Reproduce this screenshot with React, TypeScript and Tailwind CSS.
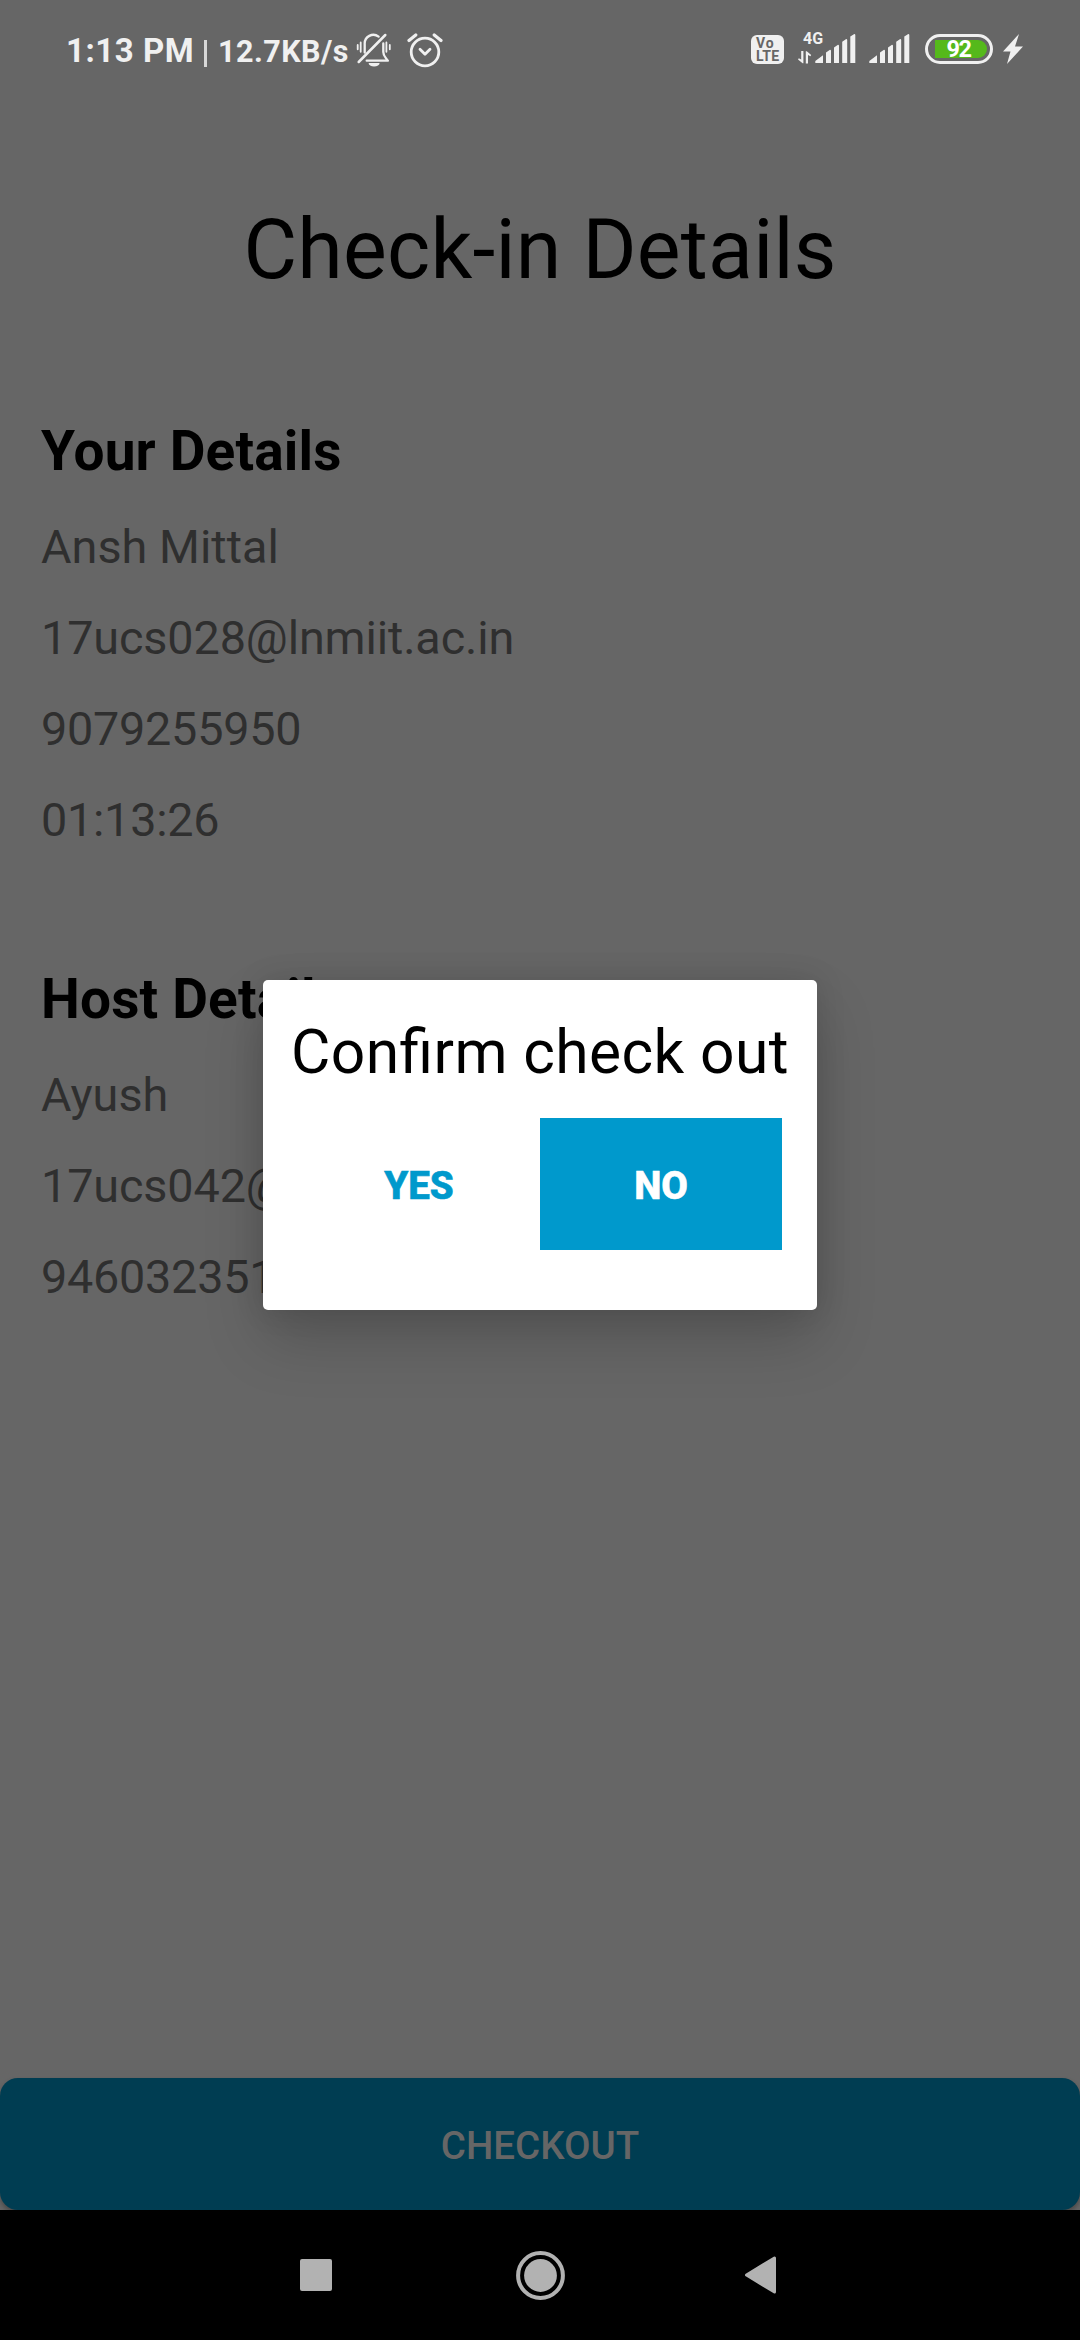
function SilentBell() {
  return (
    <svg className="h-9 w-[36px]" viewBox="0 0 36 36" fill="none" stroke="#f0f0f0" strokeWidth="2.3" strokeLinecap="round" strokeLinejoin="round">
      <path d="M8.7 20.5V12A8.7 8.7 0 0 1 22.6 4.6M27.3 11.5V20c0 4 2 5 4.5 8.7H10.7" />
      <path d="M2.7 30 29.3 3" strokeWidth="2.5" />
      <path d="M1.7 13v4.3M4.7 10.5v9.3M30.4 10.5v9.3M33.8 13v4.3" strokeWidth="1.8" />
      <path d="M12.6 31h11a5.5 3.6 0 0 1-11 0Z" fill="#f0f0f0" stroke="none" />
    </svg>
  );
}

function AlarmClock() {
  return (
    <svg className="ml-[15px] h-9 w-[36px]" viewBox="0 0 36 36" fill="none" stroke="#f0f0f0" strokeWidth="2.8" strokeLinecap="round" strokeLinejoin="round">
      <circle cx="18" cy="20" r="13.8" />
      <path d="M13 17.2 18 22.2 23 17.2" />
      <path d="M2 8.6 8.8 3M34 8.6 27.2 3" strokeWidth="3.2" />
    </svg>
  );
}

function Signal() {
  return (
    <svg className="h-[30px] w-[41px]" viewBox="0 0 41 30" fill="#f0f0f0">
      <path d="M.3 27 8 21.3V29H.3ZM11 18.5l4-2.7q1 0 1 1V29h-5ZM19 13.5l4-2.7q1 0 1 1V29h-5ZM27.2 7.8l4-2.7q1 0 1 1V29h-5ZM35.3 2.6l4-2.6q1 0 1 1V29h-5Z" />
    </svg>
  );
}

function StatusBar() {
  return (
    <header className="flex h-[100px] items-start pl-[66px] pt-[33px] text-[#f0f0f0]">
      <div className="flex h-9 items-baseline font-bold leading-9 whitespace-nowrap">
        <span className="w-[138px] text-[33px] tracking-[0.55px]">1:13 PM</span>
        <span className="mr-[11px] mt-[7px] h-[27px] w-[3px] self-start bg-[#d8d8d8]" />
        <span className="w-[138px] text-[30.5px] tracking-[0.45px]">12.7KB/s</span>
      </div>
      <div className="-mt-px flex">
        <SilentBell />
        <AlarmClock />
      </div>
      <div className="ml-auto mr-[57px] flex items-start">
        <div className="mt-[2px] flex h-[29px] w-[33px] flex-col rounded-[6px] bg-[#f0f0f0] pl-[5px] pt-[2px] text-[14px] font-bold leading-[13px] text-[#666]">
          <span className="tracking-[1px]">Vo</span>
          <span className="tracking-[0.3px]">LTE</span>
        </div>
        <div className="-mt-px ml-[14px] mr-[3px] w-[14px]">
          <span className="ml-[5px] block h-[16px] whitespace-nowrap text-[16px] font-bold leading-[14px]">4G</span>
          <svg className="mt-[3px] h-[13px] w-[14px]" viewBox="0 0 14 13" fill="#f0f0f0">
            <path d="M3.2 0h2.2v12.3H4.6L0 8.6l.8-1.3 2.4 1.2ZM7.8.3h1L13.2 4l-.8 1.3-2.4-1.2v8.4H7.8Z" />
          </svg>
        </div>
        <div className="mt-[1px] flex gap-[13px]">
          <Signal />
          <Signal />
        </div>
        <div className="ml-[15px] mt-[1px] flex h-[30px] w-[68px] rounded-full border-[3px] border-[#f0f0f0] p-[3px] pl-[7px]">
          <div className="flex h-[18px] w-[52px] items-center justify-center rounded-l-[2px] rounded-r-full bg-[#55b91b] text-[23.5px] font-bold leading-[18px] text-white">
            <span className="mr-[5px] tracking-[-1.5px]">92</span>
          </div>
        </div>
        <svg className="ml-[10px] mt-[1px] h-[30px] w-5" viewBox="0 0 20 30" fill="#f0f0f0">
          <path d="M16 0 0 17.5h7.5L4 30 20 12.5h-8Z" />
        </svg>
      </div>
    </header>
  );
}

type Row = { text: string; spacing?: string };

function Details({ title, rows }: { title: string; rows: Row[] }) {
  return (
    <section className="whitespace-nowrap">
      <h2 className="mb-[19px] text-[55px] font-bold leading-[64px] tracking-[0.15px] text-black">{title}</h2>
      {rows.map(({ text, spacing = "tracking-[0.05px]" }) => (
        <p key={text} className={`text-[46.75px] leading-[91px] text-[#2f2f2f] ${spacing}`}>{text}</p>
      ))}
    </section>
  );
}

function ConfirmDialog() {
  return (
    <div className="absolute inset-x-0 top-[980px] flex justify-center">
      <div role="dialog" className="h-[330px] w-[554px] rounded-[5px] bg-white px-[35px] pt-[37px] shadow-[0_30px_60px_rgba(0,0,0,0.18),0_0_30px_rgba(0,0,0,0.12)]">
        <h3 className="-mx-5 text-center text-[60.5px] leading-[72px] tracking-[0.4px] [font-feature-settings:'liga'] whitespace-nowrap text-black">Confirm check out</h3>
        <div className="mt-[29px] flex text-[38.5px] font-extrabold [-webkit-text-stroke-width:0.6px]">
          <button className="h-[132px] w-[242px] pt-[3px] text-[#0099cc]">YES</button>
          <button className="h-[132px] w-[242px] bg-[#0099cc] pt-[3px] text-white">NO</button>
        </div>
      </div>
    </div>
  );
}

function NavBar() {
  return (
    <nav className="flex h-[130px] items-center bg-black pl-[300px]">
      <span className="size-8 rounded-[2px] bg-[#b2b2b2]" />
      <svg className="ml-[184px] size-[49px]" viewBox="0 0 49 49">
        <circle cx="24.5" cy="24.5" r="22.4" fill="none" stroke="#b2b2b2" strokeWidth="4" />
        <circle cx="24.5" cy="24.5" r="16.4" fill="#b2b2b2" />
      </svg>
      <svg className="ml-[180px] h-[38px] w-[31px]" viewBox="0 0 31 38">
        <path d="M1.5 19 29.5 2V36Z" fill="#b2b2b2" stroke="#b2b2b2" strokeWidth="3" strokeLinejoin="round" />
      </svg>
    </nav>
  );
}

const visitor: Row[] = [
  { text: "Ansh Mittal" },
  { text: "17ucs028@lnmiit.ac.in", spacing: "tracking-[-0.12px]" },
  { text: "9079255950", spacing: "tracking-[-0.25px]" },
  { text: "01:13:26", spacing: "tracking-[-0.25px]" },
];

const host: Row[] = [
  { text: "Ayush" },
  { text: "17ucs042@lnmiit.ac.in", spacing: "tracking-[-0.12px]" },
  { text: "9460323511", spacing: "tracking-[-0.25px]" },
];

export default function App() {
  return (
    <div className="relative flex h-[2340px] w-[1080px] flex-col overflow-hidden bg-[#666] font-['Roboto',sans-serif]">
      <StatusBar />
      <h1 className="mt-[102px] text-center text-[82.5px] leading-[96px] tracking-[0.25px] text-black">Check-in Details</h1>
      <main className="mt-[121px] flex flex-1 flex-col gap-[101px] pl-[41px]">
        <Details title="Your Details" rows={visitor} />
        <Details title="Host Details" rows={host} />
      </main>
      <button className="h-[132px] rounded-[18px] bg-[#003d52] pt-[3px] text-[38.5px] font-medium text-[#666] shadow-[0_3px_5px_rgba(0,0,0,0.3)]">CHECKOUT</button>
      <NavBar />
      <ConfirmDialog />
    </div>
  );
}
